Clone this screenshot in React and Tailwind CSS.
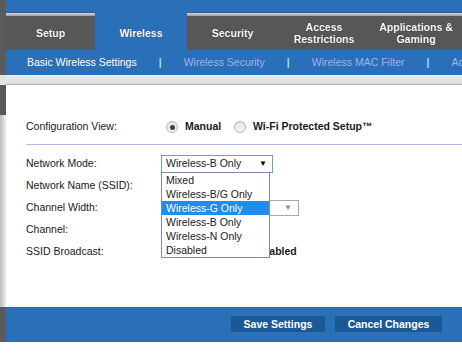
import React from "react";

const tabs = [
  { label: ["Setup"], w: "w-[89px]" },
  { label: ["Wireless"], w: "w-[92px]", active: true },
  { label: ["Security"], w: "w-[91px]" },
  { label: ["Access", "Restrictions"], w: "w-[92px]" },
  { label: ["Applications &", "Gaming"], w: "w-[92px]" },
];

const modes = ["Mixed", "Wireless-B/G Only", "Wireless-G Only", "Wireless-B Only", "Wireless-N Only", "Disabled"];

function Radio({ checked }) {
  return (
    <span className="w-[12px] h-[12px] rounded-full border border-[#b4b4b4] bg-gradient-to-b from-[#e4e4e4] to-[#f4f4f4] flex items-center justify-center shrink-0">
      {checked && <span className="w-[5px] h-[5px] rounded-full bg-[#3c3c3c]" />}
    </span>
  );
}

function RadioPair({ a, b, checkedA }) {
  return (
    <div className="flex items-center">
      <span className="ml-[5px]"><Radio checked={checkedA} /></span>
      <span className="ml-[7px] font-bold w-[49px]">{a}</span>
      <Radio />
      <span className="ml-[7px] font-bold">{b}</span>
    </div>
  );
}

function Row({ label, children }) {
  return (
    <div className="h-[22px] flex items-center">
      <div className="w-[135px] shrink-0">{label}</div>
      {children}
    </div>
  );
}

export default function App() {
  return (
    <div className="w-[462px] h-[353px] overflow-hidden bg-white flex text-[10.5px] text-[#1a1a1a] font-['Liberation_Sans',Arial,sans-serif]">
      {/* left strip */}
      <div className="w-[6px] shrink-0 flex flex-col">
        <div className="h-[75px] bg-[#5a5a5a]" />
        <div className="h-[10px] bg-[#e2e2e2]" />
        <div className="h-[30px] bg-[#5a5a5a]" />
        <div className="h-[192px] bg-gradient-to-r from-[#bcbcbc] to-[#efefef]" />
        <div className="h-[35px] bg-[#5a5a5a]" />
      </div>

      <div className="flex-1 min-w-0 overflow-hidden flex flex-col">
        <div className="h-[13px] bg-[#2a70b8] border-b border-[#3b5a86]" />

        {/* tabs */}
        <div className="h-[37px] flex">
          {tabs.map((t) =>
            t.active ? (
              <div key={t.label[0]} className={`${t.w} shrink-0 -mt-[1px] h-[38px] bg-[#2a70b8] flex items-center justify-center pt-[5px] text-white font-bold [text-shadow:0_0_1px_#123]`}>
                {t.label[0]}
              </div>
            ) : (
              <div key={t.label[0]} className={`${t.w} shrink-0 flex flex-col`}>
                <div className="h-[3px] bg-gradient-to-b from-[#d8d8e6] to-[#9898a8]" />
                <div className="flex-1 bg-[#575757] flex flex-col items-center justify-center text-white font-bold leading-[12px] text-center [text-shadow:0_0_1px_#000]">
                  {t.label.map((l) => (
                    <span key={l} className="whitespace-nowrap">{l}</span>
                  ))}
                </div>
              </div>
            )
          )}
        </div>

        {/* sub nav */}
        <div className="h-[25px] bg-[#2a70b8] flex items-center pl-[21px] gap-[22px] whitespace-nowrap overflow-hidden">
          <span className="text-white">Basic Wireless Settings</span>
          <span className="text-[#a6dcff] font-bold">|</span>
          <span className="text-[#9fb0ef]">Wireless Security</span>
          <span className="text-[#a6dcff] font-bold">|</span>
          <span className="text-[#9fb0ef]">Wireless MAC Filter</span>
          <span className="text-[#a6dcff] font-bold">|</span>
          <span className="text-[#9fb0ef]">Advanced Wireless Settings</span>
        </div>

        <div className="h-[10px] bg-gradient-to-b from-[#ebebeb] to-[#dcdcdc] border-b border-[#b0b0b0]" />

        {/* content */}
        <div className="h-[222px] bg-white pl-[20px] pt-[33px]">
          <div className="h-[18px] flex items-center">
            <div className="w-[135px] shrink-0">Configuration View:</div>
            <RadioPair a="Manual" b="Wi-Fi Protected Setup™" checkedA />
          </div>
          <div className="mt-[8px] h-px bg-[#b2b6e6]" />
          <div className="mt-[8px]">
            <Row label="Network Mode:">
              <div className="relative">
                <div className="w-[112px] h-[18px] border border-[#7099cf] bg-white flex items-center justify-between pl-[4px] pr-[5px]">
                  <span>Wireless-B Only</span>
                  <span className="text-[8px] text-black">▼</span>
                </div>
                <div className="absolute z-10 left-0 top-[17px] w-[109px] border border-[#7c8ca6] bg-white">
                  {modes.map((m) => (
                    <div
                      key={m}
                      className={`h-[14px] leading-[14px] pl-[4px] ${m === "Wireless-G Only" ? "bg-[#1e8cf0] text-white" : ""}`}
                    >
                      {m}
                    </div>
                  ))}
                </div>
              </div>
            </Row>
            <Row label="Network Name (SSID):">
              <div className="w-[100px] h-[16px] border border-[#a9a9a9]" />
            </Row>
            <Row label="Channel Width:">
              <div className="w-[138px] h-[16px] border border-[#a9a9a9] flex items-center justify-end pr-[6px]">
                <span className="text-[8px] text-[#8a8a8a]">▼</span>
              </div>
            </Row>
            <Row label="Channel:">
              <div className="w-[100px] h-[16px] border border-[#a9a9a9]" />
            </Row>
            <Row label="SSID Broadcast:">
              <RadioPair a="Enabled" b="Disabled" checkedA />
            </Row>
          </div>
        </div>

        {/* footer */}
        <div className="h-[35px] bg-[#2a70b8] flex justify-end items-start pt-[9px] pr-[20px] gap-[10px]">
          <button className="w-[94px] h-[16px] shrink-0 bg-[#1c5895] text-white font-bold leading-[16px]">Save Settings</button>
          <button className="w-[107px] h-[16px] shrink-0 bg-[#1c5895] text-white font-bold leading-[16px]">Cancel Changes</button>
        </div>
      </div>
    </div>
  );
}
